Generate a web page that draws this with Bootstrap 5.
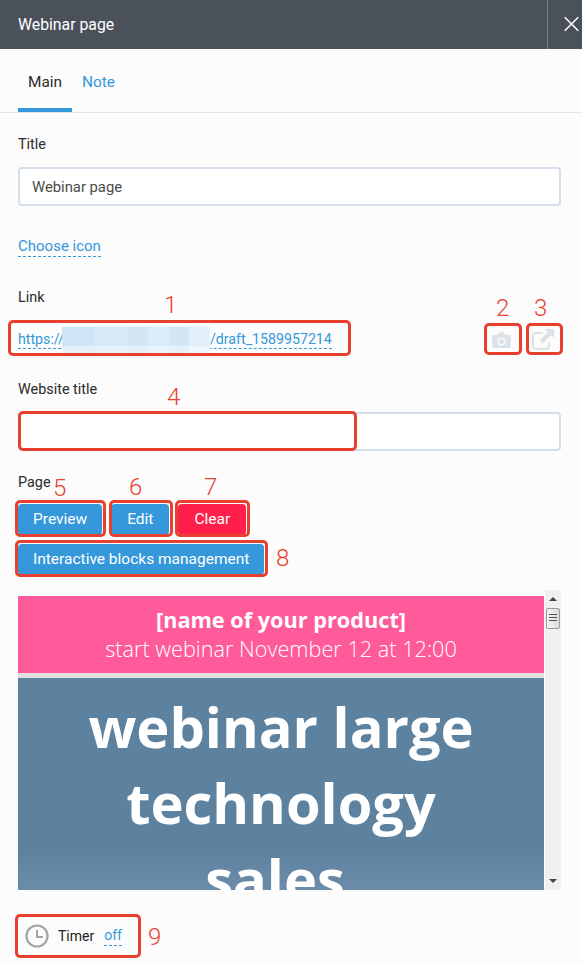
<!DOCTYPE html>
<html lang="en">
<head>
    <meta charset="UTF-8">
    <meta name="viewport" content="width=device-width, initial-scale=1.0">
    <title>Webinar page</title>
    <link href="https://cdn.jsdelivr.net/npm/bootstrap@5.3.0/dist/css/bootstrap.min.css" rel="stylesheet">
    <style>
        html, body { height: 964px; overflow: hidden; }
        body { background: #fcfcfc; font-family: Roboto, "Liberation Sans", sans-serif; font-size: 15px; color: #2b2b2b; }
        .page-wrap { height: 964px; overflow: hidden; }
        .top-bar { height: 49px; background: #4a515b; color: #fff; padding: 0 0 0 18px; }
        .top-title { font-size: 15.8px; }
        .top-close { width: 35px; height: 49px; border-left: 1px solid #7b828b; padding-left: 16px; padding-bottom: 2px; overflow: hidden; flex: none; }
        .tabs-row { height: 64px; border-bottom: 1px solid #e3e6ec; padding-left: 18px; font-size: 15.4px; }
        .tab-item { display: block; height: 63px; padding: 23px 10px 0; line-height: 20px; color: #3498db; text-decoration: none; }
        .tab-on { color: #2b2b2b; border-bottom: 4px solid #3498db; }
        .form-area { padding: 22px 21px 0 18px; }
        .field-label { display: block; line-height: 20px; margin-bottom: 12px; font-size: 14.4px; }
        .field-input { height: 39px; border: 2px solid #d3deea; border-radius: 4px; padding: 0 12px; font-size: 14.8px; color: #4a4a4a; background: #fff; }
        .dash-link { color: #3498db; text-decoration: none; border-bottom: 1px dashed #3498db; font-size: 15px; line-height: 18px; display: block; }
        .icon-row { margin-top: 31px; height: 20px; }
        .link-label { margin: 31px 0 0; line-height: 20px; font-size: 14.4px; }
        .url-row { height: 31px; margin-top: 16px; }
        .url-blur { display: inline-block; width: 148px; height: 27px; margin: -8px 0 -8px -2px; vertical-align: middle;
            background: linear-gradient(180deg, transparent 72%, rgba(255,255,255,.45) 72%),
                linear-gradient(90deg, #cfe4f4 0 22%, #d8e9f7 22% 44%, #d2e6f5 44% 58%, #dcebf8 58% 72%, #d2e6f5 72% 86%, #e2eff9 86%); }
        .url-link { font-size: 14.2px; }
        .tool-btn { width: 36px; height: 31px; flex: none; }
        .title-label2 { margin-top: 25px; }
        .page-label { display: block; line-height: 20px; margin: 22px 0 11px; font-size: 14.4px; }
        .act-btn { height: 31px; padding: 0 15px; font-size: 15.5px; line-height: 31px; border: 0; border-radius: 4px; background: #3498db; color: #fff; }
        .act-btn:hover { background: #3498db; color: #fff; }
        .act-wide { padding: 0 16px; }
        .act-red { background: #ff1f4b; }
        .act-red:hover { background: #ff1f4b; }
        .btn-line { gap: 9px; margin-bottom: 9px; }
        .preview-box { margin-top: 15px; height: 300px; }
        .preview-doc { width: 526px; margin-top: 6px; height: 294px; overflow: hidden; flex: none; font-family: "Open Sans", sans-serif; color: #fff; text-align: center; }
        .doc-pink { height: 77px; background: #ff5a9a; padding-top: 9px; font-size: 21.7px; line-height: 29px; }
        .doc-pink b { display: block; font-weight: 700; }
        .doc-pink span { display: block; font-weight: 300; }
        .doc-gap { height: 5px; background: #e0e0e0; }
        .doc-blue { height: 212px; overflow: hidden; background: linear-gradient(180deg, #5d82a0 82%, #6c8ca9 100%); font-weight: 700; font-size: 56px; line-height: 76px; padding-top: 10px; }
        .doc-last { margin-right: 12px; }
        .scroll-track { width: 17px; background: #f0f0f0; flex: none; position: relative; border-left: 1px solid #fff; }
        .scroll-thumb { position: absolute; left: 1px; top: 18px; width: 14px; height: 21px; border: 1px solid #9a9a9a; border-radius: 2px; background: linear-gradient(90deg, #f4f4f4, #dcdcdc); padding: 5px 2px; }
        .scroll-thumb i { display: block; height: 1px; margin-bottom: 2px; background: #555; }
        .arr-up, .arr-down { position: absolute; left: 4px; width: 0; height: 0; border-left: 4px solid transparent; border-right: 4px solid transparent; }
        .arr-up { top: 7px; border-bottom: 4px solid #444; }
        .arr-down { bottom: 7px; border-top: 4px solid #444; }
        .timer-row { margin-top: 34px; padding-left: 7px; gap: 9px; height: 24px; font-size: 14px; color: #222; }
        .timer-off { font-size: 14px; line-height: 19px; margin-left: 1px; }
        .mark-box { position: absolute; border: 3px solid #e8402f; border-radius: 5px; pointer-events: none; }
        .mark-num { position: absolute; color: #e8402f; font-family: Roboto, sans-serif; font-size: 24px; line-height: 24px; font-weight: 300; }
    </style>
</head>
<body>
    <div class="page-wrap position-relative">
        <div class="top-bar d-flex justify-content-between align-items-center">
            <div class="top-title">Webinar page</div>
            <div class="top-close d-flex align-items-center">
                <svg width="24" height="20" viewBox="0 0 24 20"><path d="M1 1 L19 19 M19 1 L1 19" stroke="#fff" stroke-width="2" fill="none"/></svg>
            </div>
        </div>

        <div class="tabs-row d-flex">
            <a class="tab-item tab-on" href="#">Main</a>
            <a class="tab-item" href="#">Note</a>
        </div>

        <div class="form-area">
            <label class="field-label">Title</label>
            <input type="text" class="form-control field-input" value="Webinar page">
            <div class="icon-row d-flex"><a class="dash-link" href="#">Choose icon</a></div>

            <div class="link-label">Link</div>
            <div class="url-row d-flex justify-content-between align-items-center">
                <a class="dash-link url-link" href="#">https://<span class="url-blur"></span>/draft_1589957214</a>
                <div class="d-flex gap-1">
                    <div class="tool-btn d-flex align-items-center justify-content-center pe-1">
                        <svg width="19" height="16" viewBox="0 0 19 16"><path fill-rule="evenodd" fill="#dbe3e9" d="M2 3 H5.5 L7 0.5 H12 L13.5 3 H17 a2 2 0 0 1 2 2 V14 a2 2 0 0 1 -2 2 H2 a2 2 0 0 1 -2 -2 V5 a2 2 0 0 1 2 -2 Z M9.5 5.5 a4 4 0 1 0 0 8 a4 4 0 1 0 0 -8 Z M9.5 7 a2.5 2.5 0 1 1 0 5 a2.5 2.5 0 1 1 0 -5 Z"/></svg>
                    </div>
                    <div class="tool-btn d-flex align-items-center justify-content-center">
                        <svg width="22" height="21" viewBox="0 0 22 21"><path fill="none" stroke="#dbe3e9" stroke-width="2" d="M11 4 H4 a3 3 0 0 0 -3 3 V17 a3 3 0 0 0 3 3 H14 a3 3 0 0 0 3 -3 V13"/><path fill="#dbe3e9" d="M13 0 H22 V9 L19 6 L10.5 14.5 L7.5 11.5 L16 3 Z"/></svg>
                    </div>
                </div>
            </div>

            <label class="field-label title-label2">Website title</label>
            <input type="text" class="form-control field-input">

            <label class="page-label">Page</label>
            <div class="d-flex btn-line">
                <button class="btn act-btn">Preview</button>
                <button class="btn act-btn act-wide">Edit</button>
                <button class="btn act-btn act-wide act-red">Clear</button>
            </div>
            <div class="d-flex btn-line">
                <button class="btn act-btn">Interactive blocks management</button>
            </div>

            <div class="preview-box d-flex">
                <div class="preview-doc">
                    <div class="doc-pink"><b>[name of your product]</b><span>start webinar November 12 at 12:00</span></div>
                    <div class="doc-gap"></div>
                    <div class="doc-blue">webinar large<br>technology<br><span class="doc-last">sales</span></div>
                </div>
                <div class="scroll-track">
                    <div class="arr-up"></div>
                    <div class="scroll-thumb"><i></i><i></i><i></i></div>
                    <div class="arr-down"></div>
                </div>
            </div>

            <div class="timer-row d-flex align-items-center">
                <svg width="24" height="24" viewBox="0 0 24 24"><circle cx="12" cy="12" r="10.5" fill="none" stroke="#a3a3a8" stroke-width="2.2"/><path d="M12 6 V13 H18" fill="none" stroke="#a3a3a8" stroke-width="2"/></svg>
                <span>Timer</span>
                <a class="dash-link timer-off" href="#">off</a>
            </div>
        </div>

        <!-- annotations drawn over the screenshot -->
        <div class="mark-box" style="left:8px;top:320px;width:343px;height:36px"></div>
        <div class="mark-box" style="left:484px;top:323px;width:38px;height:32px"></div>
        <div class="mark-box" style="left:526px;top:323px;width:37px;height:32px"></div>
        <div class="mark-box" style="left:18px;top:411px;width:339px;height:40px"></div>
        <div class="mark-box" style="left:15px;top:500px;width:91px;height:37px"></div>
        <div class="mark-box" style="left:109px;top:500px;width:64px;height:37px"></div>
        <div class="mark-box" style="left:175px;top:500px;width:75px;height:37px"></div>
        <div class="mark-box" style="left:15px;top:540px;width:253px;height:37px"></div>
        <div class="mark-box" style="left:15px;top:914px;width:126px;height:44px"></div>
        <span class="mark-num" style="left:164px;top:293px">1</span>
        <span class="mark-num" style="left:496px;top:296px">2</span>
        <span class="mark-num" style="left:534px;top:296px">3</span>
        <span class="mark-num" style="left:167px;top:385px">4</span>
        <span class="mark-num" style="left:53px;top:476px">5</span>
        <span class="mark-num" style="left:129px;top:475px">6</span>
        <span class="mark-num" style="left:204px;top:475px">7</span>
        <span class="mark-num" style="left:276px;top:546px">8</span>
        <span class="mark-num" style="left:148px;top:925px">9</span>
    </div>

    <script src="https://cdn.jsdelivr.net/npm/bootstrap@5.3.0/dist/js/bootstrap.bundle.min.js"></script>
</body>
</html>
